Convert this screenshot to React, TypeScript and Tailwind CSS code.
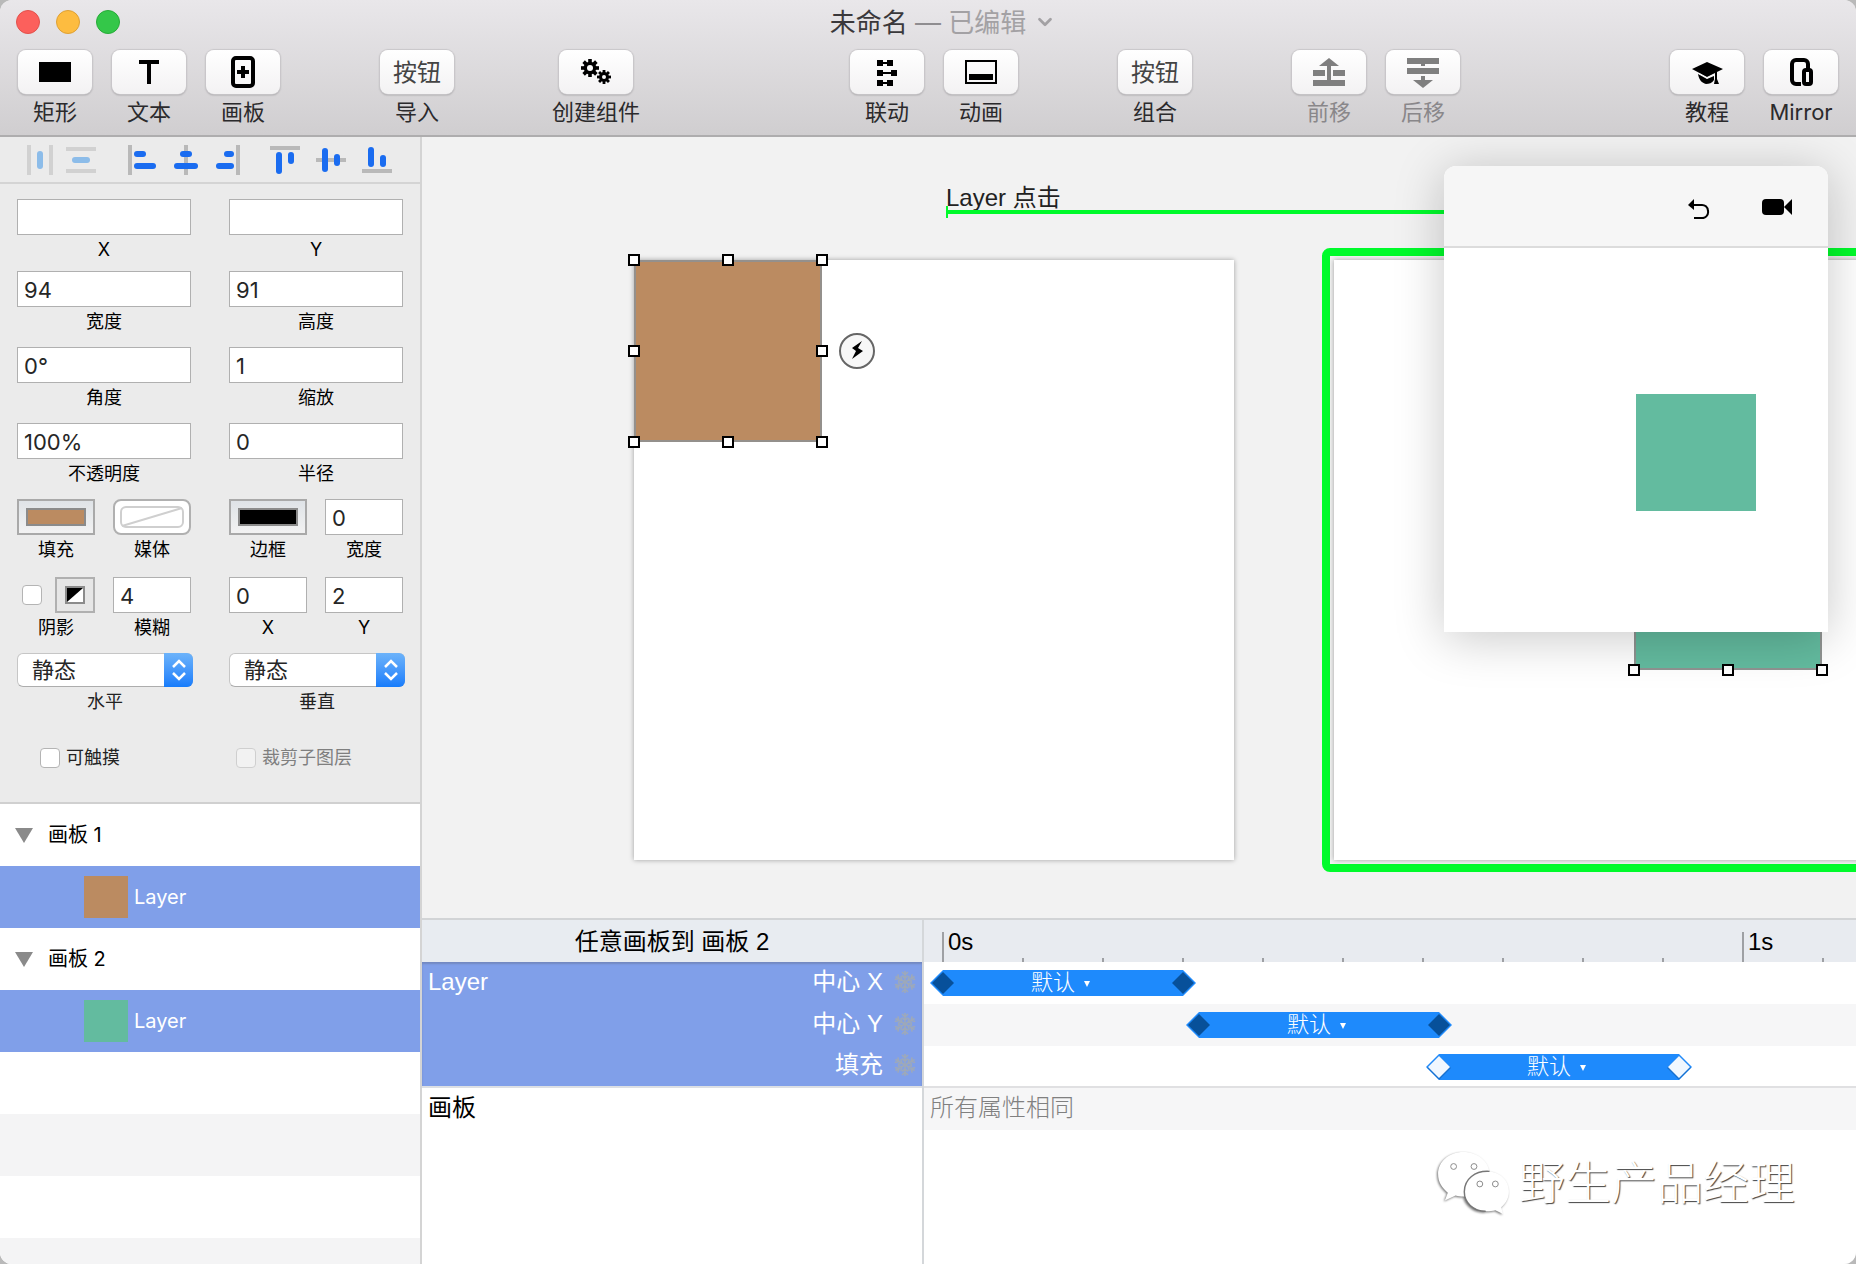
import type { ReactNode } from "react";
import { ChevronDown } from "lucide-react";

const uiFont = "font-['Inter','Noto_Sans_CJK_SC',sans-serif]";
const canvasFont = "font-['Liberation_Sans','Noto_Sans_CJK_SC',sans-serif]";

const PX_PER_SECOND = 800;

const tracks = [
  { name: "中心 X", start: 0, end: 0.3, selected: false, row: "h-[42px] bg-white" },
  { name: "中心 Y", start: 0.32, end: 0.62, selected: false, row: "h-[42px] bg-[#f6f6f7]" },
  { name: "填充", start: 0.62, end: 0.92, selected: true, row: "h-10 bg-white" },
];

const layers = [
  { artboard: "画板 1", swatch: "bg-[#bb8b61]" },
  { artboard: "画板 2", swatch: "bg-[#63bb9f]" },
];

export default function App() {
  return (
    <div className="bg-[#b9b9b9]">
      <div
        className={`flex h-screen flex-col overflow-hidden rounded-xl bg-[#ebebeb] text-black ${uiFont}`}
      >
        <WindowHeader />
        <div className="flex min-h-0 flex-1">
          <aside className="flex w-[422px] shrink-0 flex-col border-r-2 border-[#d4d4d4]">
            <AlignBar />
            <Inspector />
            <LayerList />
          </aside>
          <main className={`flex min-w-0 flex-1 flex-col ${canvasFont}`}>
            <Canvas />
            <Timeline />
          </main>
        </div>
      </div>
    </div>
  );
}

/* ---------- title bar and toolbar ---------- */

function WindowHeader() {
  return (
    <header className="shrink-0 border-b-2 border-[#aeadae] bg-linear-to-b from-[#e9e7ea] to-[#d0ced0]">
      <div className="grid h-11 grid-cols-[1fr_auto_1fr] items-center px-4">
        <div className="flex gap-4">
          <button aria-label="关闭" className="size-6 rounded-full border border-[#e2514c] bg-[#fc605c]" />
          <button aria-label="最小化" className="size-6 rounded-full border border-[#dea034] bg-[#fdbc40]" />
          <button aria-label="缩放窗口" className="size-6 rounded-full border border-[#27ab38] bg-[#34c749]" />
        </div>
        <h1 className="pt-0.5 text-[26px] leading-8 text-[#3a383b]">
          未命名 <span className="text-[#8f8d90]">—</span> <span className="text-[#a3a1a4]">已编辑</span>
        </h1>
        <button aria-label="文稿菜单" className="ml-2 w-5 text-[#a3a1a4]">
          <ChevronDown size={22} strokeWidth={3} />
        </button>
      </div>
      <nav className="flex items-start px-[18px] pt-1.5 pb-[9px]">
        <div className="flex gap-5">
          <ToolButton label="矩形">
            <rect x="6" y="12" width="32" height="20" />
          </ToolButton>
          <ToolButton label="文本">
            <path d="M12 10h20v4h-8v20h-4V14h-8z" />
          </ToolButton>
          <ToolButton label="画板">
            <rect x="12" y="8" width="20" height="28" rx="3" fill="none" stroke="currentColor" strokeWidth="4" />
            <path d="M20 16h4v4h4v4h-4v4h-4v-4h-4v-4h4z" />
          </ToolButton>
        </div>
        <div className="w-25" />
        <ToolButton label="导入" text="按钮" />
        <div className="w-[98px]" />
        <ToolButton label="创建组件">
          <Gear cx={16} cy={18} r={9} hole={3} />
          <Gear cx={30} cy={27} r={7} hole={2} />
        </ToolButton>
        <div className="flex-1" />
        <div className="flex gap-5">
          <ToolButton label="联动">
            <path d="M12 10h6v2h4v-2h6v6h-6v-2h-4v2h-6zM12 20h6v2h8v-2h6v6h-6v-2h-8v2h-6zM12 30h6v2h4v-2h6v6h-6v-2h-4v2h-6z" />
          </ToolButton>
          <ToolButton label="动画">
            <rect x="7" y="11" width="30" height="22" fill="none" stroke="currentColor" strokeWidth="2" />
            <rect x="10" y="24" width="24" height="6" />
          </ToolButton>
        </div>
        <div className="w-25" />
        <ToolButton label="组合" text="按钮" />
        <div className="w-25" />
        <div className="flex gap-5">
          <ToolButton label="前移" disabled>
            <path d="M22 8l10 8h-8v14h14v6H6v-6h14V16h-8zM6 20h12v6H6zM26 20h12v6H26z" />
          </ToolButton>
          <ToolButton label="后移" disabled>
            <path d="M6 8h32v6H24v2h-4v-2H6zM6 18h32v6H6zM20 26h4v4h8l-10 8-10-8h8z" />
          </ToolButton>
        </div>
        <div className="flex-1" />
        <div className="flex gap-5">
          <ToolButton label="教程">
            <path d="M22 12l16 7-6 3v7l2 5h-5l1-5v-6l-8 4-15-8z" />
            <path d="M13 24l9 5 7-3v4c-2 3-5 4-8 4-4-1-7-4-8-10z" />
            <path d="M14 23.5l8 4.500 7-3.500" fill="none" stroke="#fafafa" strokeWidth="1" />
          </ToolButton>
          <ToolButton label="Mirror">
            <path
              d="M22 34h-5a4 4 0 0 1-4-4V14a4 4 0 0 1 4-4h8a4 4 0 0 1 4 4v6"
              fill="none"
              stroke="currentColor"
              strokeWidth="4"
            />
            <rect x="25" y="20" width="7" height="14" rx="2" fill="none" stroke="currentColor" strokeWidth="4" />
          </ToolButton>
        </div>
      </nav>
    </header>
  );
}

function ToolButton({
  label,
  text,
  disabled = false,
  children,
}: {
  label: string;
  text?: string;
  disabled?: boolean;
  children?: ReactNode;
}) {
  return (
    <button
      disabled={disabled}
      className="flex min-w-[74px] flex-col items-center gap-1 text-[#2b2a2c] disabled:text-[#89878a]"
    >
      <span
        className={`flex h-11 w-[74px] items-center justify-center rounded-lg bg-linear-to-b from-white to-[#f3f2f3] shadow-[0_0_1px_1px_#c9c7ca,0_1px_2px_#8d8b8e] ${
          disabled ? "text-[#7f7f7f]" : "text-black"
        }`}
      >
        {text ? (
          <span className="pt-0.5 text-2xl text-[#444]">{text}</span>
        ) : (
          <svg width="44" height="44" viewBox="0 0 44 44" fill="currentColor">
            {children}
          </svg>
        )}
      </span>
      <span className="text-[22px] leading-7 whitespace-nowrap">{label}</span>
    </button>
  );
}

function Gear({ cx, cy, r, hole }: { cx: number; cy: number; r: number; hole: number }) {
  return (
    <g>
      {[0, 45, 90, 135].map((a) => (
        <rect
          key={a}
          x={cx - r / 5}
          y={cy - r}
          width={(r * 2) / 5}
          height={r * 2}
          transform={`rotate(${a} ${cx} ${cy})`}
        />
      ))}
      <circle cx={cx} cy={cy} r={r * 0.7} />
      <circle cx={cx} cy={cy} r={hole} fill="#fafafa" />
    </g>
  );
}

/* ---------- sidebar ---------- */

function AlignBar() {
  return (
    <div className="flex h-[47px] shrink-0 items-center border-b-2 border-[#d4d4d4] pl-6">
      <div className="flex gap-3 opacity-50">
        <AlignButton label="水平分布" bars="M3 0h4v30h-4zM25 0h4v30h-4z" pills={[[13, 6, 6, 18]]} pale />
        <AlignButton label="垂直分布" bars="M0 2h30v4h-30zM0 24h30v4h-30z" pills={[[6, 12, 18, 6]]} pale />
      </div>
      <div className="ml-8 flex gap-3.5">
        <AlignButton label="左对齐" bars="M0 0h4v30h-4z" pills={[[6, 6, 12, 6], [6, 18, 22, 6]]} />
        <AlignButton label="水平居中" bars="M12 0h4v30h-4z" pills={[[8, 6, 12, 6], [2, 18, 24, 6]]} />
        <AlignButton label="右对齐" bars="M20 0h4v30h-4z" pills={[[8, 6, 10, 6], [0, 18, 18, 6]]} />
      </div>
      <div className="ml-6 flex gap-4">
        <AlignButton label="顶对齐" bars="M0 1h30v4h-30z" pills={[[6, 7, 6, 22], [18, 7, 6, 12]]} />
        <AlignButton label="垂直居中" bars="M0 13h30v4h-30z" pills={[[6, 3, 6, 24], [18, 9, 6, 12]]} />
        <AlignButton label="底对齐" bars="M0 24h30v4h-30z" pills={[[6, 2, 6, 20], [18, 10, 6, 12]]} />
      </div>
    </div>
  );
}

function AlignButton({
  label,
  bars,
  pills,
  pale = false,
}: {
  label: string;
  bars: string;
  pills: number[][];
  pale?: boolean;
}) {
  return (
    <button aria-label={label} disabled={pale}>
      <svg width="30" height="30" viewBox="0 0 30 30">
        <path d={bars} fill="#b9b9b9" />
        {pills.map(([x, y, w, h]) => (
          <rect key={`${x}-${y}`} x={x} y={y} width={w} height={h} rx="3" fill={pale ? "#2f8ee8" : "#1a6cf0"} />
        ))}
      </svg>
    </button>
  );
}

function Inspector() {
  return (
    <form className="shrink-0 border-b-2 border-[#d0d0d0] pt-[15px] pb-8 pl-[17px] text-lg">
      <Row className="mb-[9px]">
        <Field label="X" value="" />
        <Field label="Y" value="" />
      </Row>
      <Row className="mb-[13px]">
        <Field label="宽度" value="94" />
        <Field label="高度" value="91" />
      </Row>
      <Row className="mb-[13px]">
        <Field label="角度" value="0°" />
        <Field label="缩放" value="1" />
      </Row>
      <Row className="mb-[13px]">
        <Field label="不透明度" value="100%" />
        <Field label="半径" value="0" />
      </Row>
      <Row className="mb-[15px]">
        <Pair>
          <Swatch label="填充" color="bg-[#bb8b61]" />
          <button type="button" className="flex flex-col items-center gap-[3px]">
            <span className="flex h-9 w-full items-center justify-center rounded-lg border-2 border-[#b0b0b0] bg-white">
              <svg width="64" height="22" viewBox="0 0 64 22" fill="none" stroke="#cfcfcf" strokeWidth="2">
                <rect x="1" y="1" width="62" height="20" rx="5" />
                <path d="M2 20L62 2" />
              </svg>
            </span>
            <span className="leading-6">媒体</span>
          </button>
        </Pair>
        <Pair>
          <Swatch label="边框" color="bg-black" />
          <Field label="宽度" value="0" />
        </Pair>
      </Row>
      <Row className="mb-[13px]">
        <Pair>
          <div className="flex flex-col items-center gap-[3px]">
            <div className="flex h-9 w-full items-center justify-between pl-[5px]">
              <Checkbox id="shadow" />
              <button
                type="button"
                aria-label="阴影颜色"
                className="flex h-9 w-10 items-center justify-center border-2 border-[#b0b0b0] bg-[#e6e6e6]"
              >
                <svg width="20" height="18" viewBox="0 0 20 18">
                  <rect x="1" y="1" width="18" height="16" fill="#fff" stroke="#8b8b8b" strokeWidth="2" />
                  <path d="M2 2h16L2 16z" />
                </svg>
              </button>
            </div>
            <label htmlFor="shadow" className="leading-6">
              阴影
            </label>
          </div>
          <Field label="模糊" value="4" />
        </Pair>
        <Pair>
          <Field label="X" value="0" />
          <Field label="Y" value="2" />
        </Pair>
      </Row>
      <Row className="mb-8">
        <Dropdown label="水平" />
        <Dropdown label="垂直" />
      </Row>
      <Row>
        <div className="flex h-6 items-center gap-1.5 pl-[23px]">
          <Checkbox id="touchable" />
          <label htmlFor="touchable" className="text-[#222]">
            可触摸
          </label>
        </div>
        <div className="flex h-6 items-center gap-1.5 pl-[7px]">
          <Checkbox id="clip" disabled />
          <label htmlFor="clip" className="text-[#7f7f7f]">
            裁剪子图层
          </label>
        </div>
      </Row>
    </form>
  );
}

function Row({ className = "", children }: { className?: string; children: ReactNode }) {
  return <div className={`grid grid-cols-[174px_176px] gap-x-[38px] ${className}`}>{children}</div>;
}

function Pair({ children }: { children: ReactNode }) {
  return <div className="grid w-[174px] grid-cols-2 gap-x-[18px]">{children}</div>;
}

function Field({ label, value }: { label: string; value: string }) {
  return (
    <label className="flex max-w-[174px] flex-col items-center gap-[3px]">
      <input
        type="text"
        defaultValue={value}
        className="h-9 w-full border border-[#b0b0b0] bg-white px-1.5 pt-0.5 text-[22px] text-[#262626] outline-none"
      />
      <span className="leading-6">{label}</span>
    </label>
  );
}

function Swatch({ label, color }: { label: string; color: string }) {
  return (
    <button type="button" className="flex flex-col items-center gap-[3px]">
      <span className="flex h-9 w-full items-center justify-center border-2 border-[#a9a9a9] bg-linear-to-b from-[#dfe3e7] to-[#f2f2f2]">
        <span className={`h-[18px] w-[60px] border-2 border-[#8b8b8b] ${color}`} />
      </span>
      <span className="leading-6">{label}</span>
    </button>
  );
}

function Dropdown({ label }: { label: string }) {
  return (
    <label className="flex w-[176px] flex-col items-center gap-[3px]">
      <span className="relative block h-[34px] w-full">
        <select className="h-full w-full appearance-none rounded-md border border-[#c6c6c6] border-b-[#adadad] bg-white pl-3.5 text-[22px] leading-7 text-[#262626] outline-none">
          <option>静态</option>
        </select>
        <span className="pointer-events-none absolute top-0 right-0 flex h-full w-[29px] items-center justify-center rounded-r-md bg-linear-to-b from-[#6cb3fa] to-[#157cfb]">
          <svg width="14" height="22" viewBox="0 0 14 22" fill="none" stroke="#fff" strokeWidth="2.500">
            <path d="M1 8l6-6 6 6M1 14l6 6 6-6" />
          </svg>
        </span>
      </span>
      <span className="leading-6 text-[#222]">{label}</span>
    </label>
  );
}

function Checkbox({ id, disabled = false }: { id: string; disabled?: boolean }) {
  return (
    <input
      id={id}
      type="checkbox"
      disabled={disabled}
      className="size-5 shrink-0 appearance-none rounded border border-[#b4b4b4] bg-white checked:bg-[#157cfb] disabled:border-[#cfcfcf] disabled:bg-[#f2f2f2]"
    />
  );
}

function LayerList() {
  return (
    <div className="min-h-0 flex-1 overflow-hidden bg-white text-xl">
      {layers.map((l) => (
        <div key={l.artboard}>
          <div className="flex h-[62px] items-center pl-[15px]">
            <button aria-label="折叠" className="mr-[15px] w-[18px]">
              <svg width="18" height="15" viewBox="0 0 18 15" fill="#8a8a8a">
                <path d="M0 0h18L9 15z" />
              </svg>
            </button>
            {l.artboard}
          </div>
          <div className="flex h-[62px] items-center gap-1.5 bg-[#809fe9] pl-[84px] text-white">
            <span className={`h-[42px] w-11 ${l.swatch}`} />
            Layer
          </div>
        </div>
      ))}
      <div className="h-[62px]" />
      <div className="h-[62px] bg-[#f4f4f5]" />
      <div className="h-[62px]" />
      <div className="h-[62px] bg-[#f4f4f5]" />
    </div>
  );
}

/* ---------- canvas ---------- */

const artboardClass = "absolute top-[123px] size-[600px] bg-white shadow-[0_0_5px_rgba(0,0,0,0.35)]";

function Canvas() {
  return (
    <section className="relative min-h-0 flex-1 overflow-hidden bg-[#f2f2f2]">
      <div className="absolute top-[45px] right-[100px] left-[524px]">
        <p className="text-2xl leading-8 text-[#222]">Layer 点击</p>
        <div className="absolute top-[28px] h-1 w-full bg-[#00fb2b]" />
        <div className="absolute top-[24px] h-3 w-0.5 bg-[#00fb2b]" />
      </div>

      <div className={`${artboardClass} left-[212px]`}>
        <div className="absolute top-0 left-0 h-[182px] w-[188px] border-2 border-[#94908c] bg-[#bb8b61]">
          <Handles />
        </div>
        <button
          aria-label="添加交互"
          className="absolute top-[73px] left-[205px] size-9 rounded-full border-2 border-[#666] bg-[#f7f7f7]"
        >
          <svg width="32" height="32" viewBox="2 2 32 32">
            <path d="M23 8L13 15l4 3-4 8 11-8-5-3z" />
          </svg>
        </button>
      </div>

      <div className="absolute top-[111px] left-[900px] size-[624px] rounded-lg border-8 border-[#00fb2b]" />
      <div className={`${artboardClass} left-[912px]`}>
        <div className="absolute top-[228px] left-[300px] h-[182px] w-[188px] border-2 border-[#8f9391] bg-[#63bb9f]">
          <Handles />
        </div>
      </div>

      <PreviewWindow />
    </section>
  );
}

function Handles() {
  return (
    <div className="absolute -inset-2 grid grid-cols-3 content-between">
      {["tl", "tc", "tr", "ml", "mc", "mr", "bl", "bc", "br"].map((h) => (
        <span
          key={h}
          className={`size-3 border-2 border-black bg-white ${h === "mc" ? "invisible" : ""} ${
            h[1] === "c" ? "justify-self-center" : h[1] === "r" ? "justify-self-end" : ""
          }`}
        />
      ))}
    </div>
  );
}

function PreviewWindow() {
  return (
    <div className="absolute top-[29px] right-[28px] w-96 rounded-t-xl bg-white shadow-[0_6px_50px_rgba(0,0,0,0.22)]">
      <div className="flex h-[82px] items-center justify-end gap-[50px] rounded-t-xl border-b-2 border-[#dcdcdc] bg-[#f6f6f6] pt-0.5 pr-[35px]">
        <button aria-label="重新开始" className="pt-1">
          <svg width="24" height="20" viewBox="0 0 24 20">
            <path d="M1 6l6-6v11z" />
            <path d="M5 6h9a6 6 0 0 1 7 6 6 6 0 0 1-7 7H7" fill="none" stroke="#000" strokeWidth="2" />
          </svg>
        </button>
        <button aria-label="录制">
          <svg width="32" height="16" viewBox="0 0 32 16">
            <rect x="1" width="22" height="16" rx="4" />
            <path d="M23 8l8-8v16z" />
          </svg>
        </button>
      </div>
      <div className="h-96 pt-[146px] pl-48">
        <div className="h-[117px] w-[120px] bg-[#63bb9f]" />
      </div>
    </div>
  );
}

/* ---------- timeline ---------- */

function Timeline() {
  return (
    <section className="relative flex h-[346px] shrink-0 border-t-2 border-[#d2d4d6] bg-white text-2xl">
      <div className="w-[502px] shrink-0 border-r-2 border-[#d4d7da]">
        <h2 className="flex h-[42px] items-center justify-center bg-[#e8ecf1] pt-0.5">任意画板到 画板 2</h2>
        <div className="flex justify-between border-b-2 border-[#dcdfe4] bg-[#809fe9] pl-1.5 text-white shadow-[inset_0_2px_2px_#7288c0]">
          <span className="leading-10">Layer</span>
          <ul>
            {tracks.map((t) => (
              <li key={t.name} className="flex h-[42px] items-center justify-end gap-2.5 pr-[5px] pb-0.5 last:h-10">
                {t.name}
                <button aria-label="冻结" className="text-[#9ea9b8]">
                  <FreezeIcon />
                </button>
              </li>
            ))}
          </ul>
        </div>
        <p className="pl-1.5 leading-10">画板</p>
      </div>

      <div className="min-w-0 flex-1 overflow-hidden">
        <div className="flex h-11 items-end border-b-2 border-[#e0e0e2] bg-[#e8ebf0] pl-[18px]">
          {Array.from({ length: 14 }, (_, i) =>
            i % 10 === 0 ? (
              <div key={i} className="h-[30px] w-20 shrink-0 border-l-2 border-[#9ea0a4] pl-1 leading-5">
                {i / 10}s
              </div>
            ) : (
              <div key={i} className="h-1 w-20 shrink-0 border-l-2 border-[#9ea0a4]" />
            )
          )}
        </div>
        <div className="-mt-0.5 border-b-2 border-[#e0e0e2]">
          {tracks.map((t) => (
            <div key={t.name} className={`flex pt-2 ${t.row}`}>
              <Tween start={t.start} end={t.end} selected={t.selected} />
            </div>
          ))}
        </div>
        <p className="h-[42px] bg-[#f6f6f7] pl-1.5 leading-10 font-light text-[#808080]">所有属性相同</p>
      </div>

      <Watermark />
    </section>
  );
}

function FreezeIcon() {
  return (
    <svg width="24" height="24" viewBox="-12 -12 24 24" fill="none" stroke="currentColor" strokeWidth="1.500">
      {[0, 60, 120, 180, 240, 300].map((a) => (
        <path key={a} d="M0 0V-11M-3 -10L0 -7L3 -10M-3 -6.500L0 -3.500L3 -6.500" transform={`rotate(${a})`} />
      ))}
    </svg>
  );
}

function Tween({ start, end, selected }: { start: number; end: number; selected: boolean }) {
  return (
    <button
      className="flex h-[26px] items-center justify-between bg-[#1e8afc] text-[22px] leading-6 font-light text-white [clip-path:polygon(13px_0,calc(100%-13px)_0,100%_50%,calc(100%-13px)_100%,13px_100%,0_50%)]"
      style={{
        marginLeft: 6 + start * PX_PER_SECOND,
        width: (end - start) * PX_PER_SECOND + 26,
      }}
    >
      <Keyframe selected={selected} />
      <span className="flex items-center gap-2 pr-1">
        默认
        <svg width="8" height="10" viewBox="0 0 8 10" fill="#fff">
          <path d="M1 3h6L4 9z" />
        </svg>
      </span>
      <Keyframe selected={selected} />
    </button>
  );
}

function Keyframe({ selected }: { selected: boolean }) {
  return (
    <svg width="26" height="26" viewBox="0 0 26 26">
      {selected && <path d="M13 2l12 12-12 12L1 14z" fill="#1670d0" />}
      <path d="M13 2l11 11-11 11L2 13z" fill={selected ? "#f0f7ff" : "#07509a"} />
    </svg>
  );
}

function Watermark() {
  return (
    <div className="pointer-events-none absolute right-[61px] bottom-12 flex items-center gap-2 text-[46px] leading-[66px] font-light text-white [text-shadow:1px_1px_1px_#444]">
      <svg width="74" height="66" viewBox="0 0 76 68" className="overflow-visible drop-shadow-[-1px_1px_1px_#777]">
        <path
          d="M27 2C12 2 1 12 1 25c0 8 4 14 10 19l-3 8 11-5c3 1 5 1 8 1 15 0 27-10 27-23S42 2 27 2z"
          fill="#fff"
        />
        <path
          d="M51 22c-13 0-23 9-23 21s10 20 23 20c3 0 6 0 9-1l8 4-2-7c5-4 8-10 8-16 0-12-10-21-23-21z"
          fill="#fff"
        />
        <path d="M54 22c-15-1-26 8-26 21 0 11 9 20 22 20" fill="none" stroke="#777" strokeWidth="1.500" />
        <g fill="#fff" stroke="#888" strokeWidth="1">
          <circle cx="17" cy="17" r="3" />
          <circle cx="38" cy="17" r="3" />
          <circle cx="44" cy="35" r="3" />
          <circle cx="60" cy="35" r="3" />
        </g>
      </svg>
      野生产品经理
    </div>
  );
}
